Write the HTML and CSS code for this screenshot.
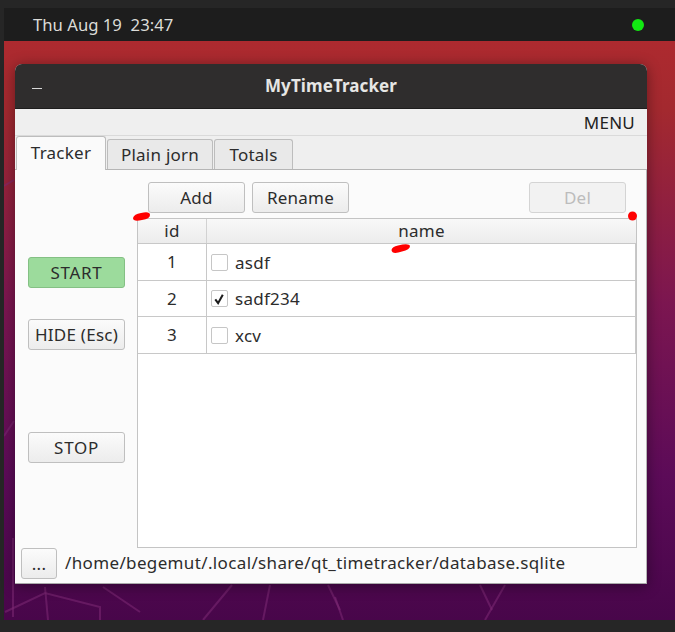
FILE: index.html
```html
<!DOCTYPE html>
<html lang="en">
<head>
<meta charset="utf-8">
<title>MyTimeTracker</title>
<link rel="stylesheet" href="styles.css">
</head>
<body>
<div class="screen">
  <header class="panel">
    <span class="clock">Thu Aug 19&nbsp; 23:47</span>
    <span class="led"></span>
  </header>
  <main class="desktop">
    <svg class="wall" viewBox="0 0 671 579" aria-hidden="true">
      <g fill="none" stroke="#7d2a74" stroke-opacity=".55" stroke-width="2">
        <path d="M1 571 L41 552 L96 566 L96 579"/>
        <path d="M41 546 L44 579"/>
        <path d="M9 497 L9 576"/>
        <path d="M99 546 L136 571"/>
        <path d="M228 544 L199 579"/>
        <path d="M266 544 L259 579"/>
        <path d="M324 544 L336 569"/>
        <path d="M476 544 L488 569"/>
        <path d="M501 544 L481 579"/>
        <path d="M331 556 L339 579"/>
        <path d="M0 145 L10 139"/>
        <path d="M0 395 L10 380"/>
      </g>
    </svg>
    <section class="window">
      <div class="titlebar">
        <span class="minimize"></span>
        <span class="title">MyTimeTracker</span>
      </div>
      <div class="menubar"><span>MENU</span></div>
      <nav class="tabs">
        <span class="tab tab-active">Tracker</span>
        <span class="tab tab-plain">Plain jorn</span>
        <span class="tab tab-totals">Totals</span>
      </nav>
      <div class="page">
        <aside class="side">
          <button class="btn btn-caps btn-start">START</button>
          <button class="btn btn-hide">HIDE (Esc)</button>
          <button class="btn btn-caps btn-stop">STOP</button>
        </aside>
        <div class="content">
          <div class="toolbar">
            <button class="btn">Add</button>
            <button class="btn">Rename</button>
            <button class="btn btn-del" disabled>Del</button>
          </div>
          <div class="table">
            <div class="thead">
              <div class="cell-id">id</div>
              <div class="cell-name-head">name</div>
            </div>
            <div class="row row-1">
              <div class="cell-id">1</div>
              <div class="cell-name"><span class="check"></span>asdf</div>
            </div>
            <div class="row row-2">
              <div class="cell-id">2</div>
              <div class="cell-name"><span class="check"><svg viewBox="0 0 16 16" width="16" height="16"><path d="M3.500 8.500 L6.500 12.500 L11.500 3.500" fill="none" stroke="#1c1c1c" stroke-width="2.200"/></svg></span>sadf234</div>
            </div>
            <div class="row row-3">
              <div class="cell-id">3</div>
              <div class="cell-name"><span class="check"></span>xcv</div>
            </div>
          </div>
        </div>
      </div>
      <footer class="pathbar">
        <button class="btn btn-dots">...</button>
        <span class="path">/home/begemut/.local/share/qt_timetracker/database.sqlite</span>
      </footer>
    </section>
    <svg class="marks" viewBox="0 0 671 579" aria-hidden="true">
      <g fill="#f00">
        <path d="M129 177 Q130 173 137 172 Q146 170 146 174 Q146 178 138 179 Q129 181 129 177Z"/>
        <circle cx="628.500" cy="175" r="4.500"/>
        <path d="M387.500 209 Q388 205.500 394 204.500 Q405 202 406 205 Q406 208.500 398 210.500 Q388 214 387.500 209Z"/>
      </g>
    </svg>
  </main>
</div>
</body>
</html>
```
FILE: styles.css
```css
* { box-sizing: border-box; }
html, body { margin: 0; padding: 0; }
body {
  width: 675px;
  height: 632px;
  overflow: hidden;
  background: #262626;
  font-family: "Noto Sans", "Open Sans", sans-serif;
  font-size: 17px;
  letter-spacing: .25px;
  color: #2c2c2c;
}
.screen {
  padding: 8px 0 12px 4px;
  height: 632px;
  display: flex;
  flex-direction: column;
}
.panel {
  height: 33px;
  flex: none;
  background: #1d1d1d;
  color: #dcdcd8;
  display: flex;
  align-items: center;
  justify-content: space-between;
  padding: 0 31px 0 29px;
  font-size: 16.700px;
  letter-spacing: 0;
  line-height: 20px;
}
.led {
  width: 12px;
  height: 12px;
  border-radius: 50%;
  background: #12e812;
}
.desktop {
  position: relative;
  flex: 1;
  padding: 23px 0 0 11px;
  background: linear-gradient(180deg, #ad2a2f 0%, #a3292f 12%, #7c1650 45%, #5c0b58 75%, #48064a 100%);
}
.wall, .marks {
  position: absolute;
  left: 0;
  top: 0;
  width: 671px;
  height: 579px;
  pointer-events: none;
}
.window {
  position: relative;
  width: 632px;
  height: 520px;
  display: flex;
  flex-direction: column;
  background: #f0f0f0;
  border-radius: 7px 7px 0 0;
  box-shadow: 0 2px 14px rgba(0, 0, 0, .4);
  border-bottom: 1px solid #a9a9a9;
}
.titlebar {
  height: 45px;
  flex: none;
  background: #2f2d2d;
  border-radius: 7px 7px 0 0;
  border-bottom: 1px solid #1e1d1d;
  color: #e6e6e4;
  display: flex;
  align-items: center;
  justify-content: center;
  position: relative;
}
.minimize {
  position: absolute;
  left: 17px;
  top: 24px;
  width: 10px;
  height: 1px;
  background: #d8d8d8;
}
.title {
  font-weight: 700;
  font-size: 17px;
  letter-spacing: .1px;
  line-height: 20px;
}
.menubar {
  height: 27px;
  flex: none;
  display: flex;
  justify-content: flex-end;
  align-items: center;
  padding-right: 12px;
  border-bottom: 1px solid #dadada;
  background: #efefef;
  color: #222;
}
.tabs {
  height: 34px;
  flex: none;
  display: flex;
  align-items: flex-end;
  padding-left: 1px;
  background: #efefef;
  border-bottom: 1px solid #b5b5b5;
}
.tab {
  height: 30px;
  margin-right: 1px;
  border: 1px solid #bdbdbd;
  border-bottom: none;
  border-radius: 3px 3px 0 0;
  background: #e9e9e9;
  display: flex;
  align-items: center;
  justify-content: center;
  position: relative;
}
.tab-active {
  width: 90px;
  height: 34px;
  background: #fafafa;
  margin-bottom: -1px;
  padding-bottom: 3px;
}
.tab-plain { width: 106px; }
.tab-totals { width: 79px; }
.page {
  flex: 1;
  min-height: 0;
  display: flex;
  background: #fbfbfb;
  border-right: 1px solid #b5b5b5;
}
.side {
  width: 122px;
  flex: none;
  padding: 87px 0 0 13px;
  display: flex;
  flex-direction: column;
}
.btn {
  width: 97px;
  height: 31px;
  padding: 0;
  border: 1px solid #bfbfbf;
  border-radius: 3px;
  background: linear-gradient(#fbfbfb, #ececec);
  font: inherit;
  letter-spacing: inherit;
  color: #2c2c2c;
  flex: none;
}
.btn-caps { letter-spacing: .7px; }
.btn-start {
  background: #9cdb9c;
  border-color: #84c084;
}
.btn-hide { margin-top: 31px; }
.btn-stop { margin-top: 82px; }
.content {
  flex: 1;
  min-width: 0;
  padding-top: 12px;
  display: flex;
  flex-direction: column;
}
.toolbar {
  height: 36px;
  flex: none;
  display: flex;
  gap: 7px;
  padding-left: 11px;
}
.btn-del {
  margin-left: 173px;
  color: #bcbcbc;
  border-color: #d4d4d4;
  background: #f2f2f2;
}
.table {
  width: 500px;
  flex: 1;
  background: #fff;
  border: 1px solid #c4c4c4;
}
.thead {
  height: 25px;
  display: flex;
  background: linear-gradient(#f8f8f8, #ececec);
  border-bottom: 1px solid #c8c8c8;
  line-height: 24px;
}
.thead .cell-id { border-right: 1px solid #d2d2d2; }
.cell-id {
  width: 69px;
  flex: none;
  text-align: center;
}
.cell-name-head {
  flex: 1;
  text-align: center;
}
.row {
  width: 498px;
  display: flex;
  border-bottom: 1px solid #c8c8c8;
  border-right: 1px solid #c8c8c8;
  line-height: 35px;
}
.row-1 { height: 37px; }
.row-2 { height: 36px; }
.row-3 { height: 37px; }
.row .cell-id { border-right: 1px solid #c8c8c8; }
.cell-name {
  flex: 1;
  display: flex;
  align-items: center;
  padding-left: 4px;
}
.check {
  width: 17px;
  height: 17px;
  flex: none;
  margin-right: 7px;
  border: 1px solid #c6c6c6;
  border-radius: 2px;
  background: #fff;
  display: flex;
  align-items: center;
  justify-content: center;
}
.pathbar {
  height: 35px;
  flex: none;
  display: flex;
  align-items: flex-start;
  padding-left: 6px;
  background: #fbfbfb;
  border-right: 1px solid #b5b5b5;
}
.btn-dots {
  width: 36px;
  line-height: 26px;
}
.path {
  margin-left: 8px;
  line-height: 30px;
  letter-spacing: .36px;
}
```
